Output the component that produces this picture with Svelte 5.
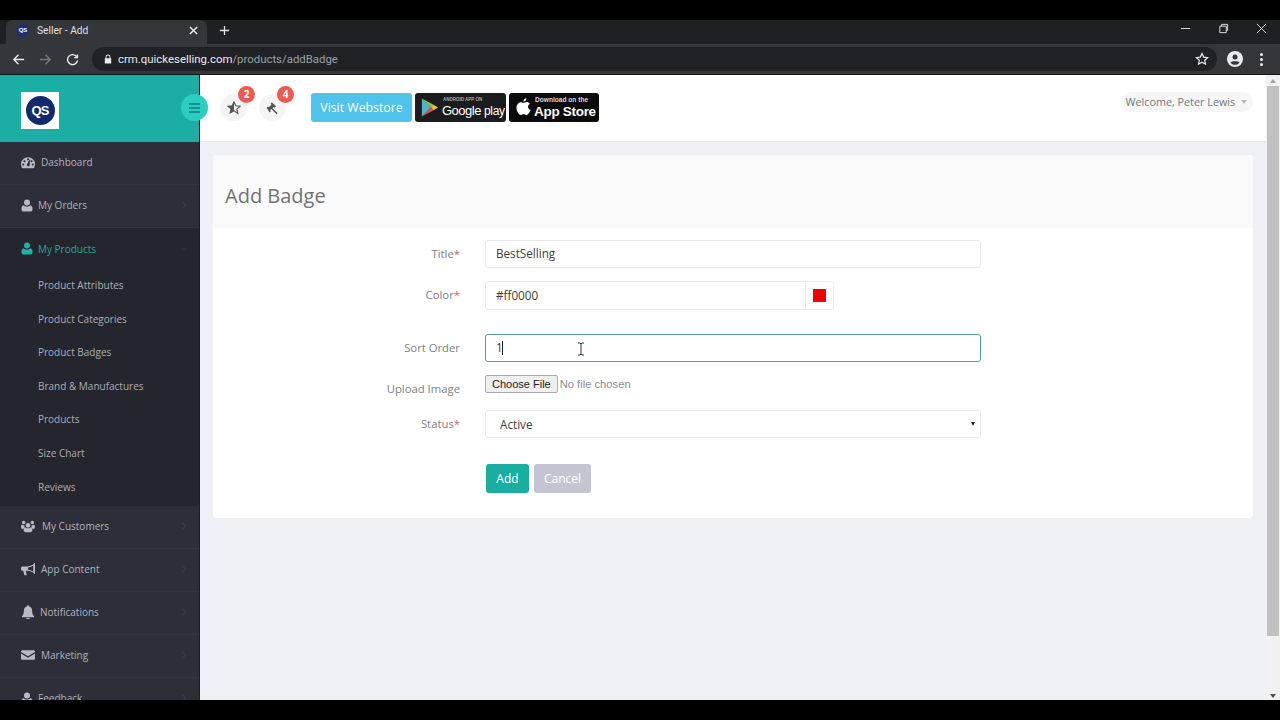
<script lang="ts">
  const icons = {
    gauge: 'M8 2.5a8 8 0 0 0-8 8c0 1.5.4 2.9 1.1 4.1.1.2.3.4.6.4h12.6c.3 0 .5-.2.6-.4.7-1.2 1.1-2.6 1.1-4.1a8 8 0 0 0-8-8zM2.5 12a1.2 1.2 0 1 1 0-2.4 1.2 1.2 0 0 1 0 2.4zm1.5-3.6a1.2 1.2 0 1 1 0-2.4 1.2 1.2 0 0 1 0 2.4zM8 6a1.2 1.2 0 1 1 0-2.4A1.2 1.2 0 0 1 8 6zm1.3 6.5a1.7 1.7 0 0 1-2.6-1.1c-.1-.6.2-1.2.6-1.5L9.6 5l.6.2-.2 5.4c.3.7 0 1.500-.7 1.900zM12 8.400a1.200 1.200 0 1 1 0-2.400 1.200 1.200 0 0 1 0 2.400zm1.500 3.600a1.200 1.200 0 1 1 0-2.400 1.200 1.200 0 0 1 0 2.400z',
    user: 'M8 0a4 4 0 1 1 0 8 4 4 0 0 1 0-8zM3.500 7.500c1 1.200 2.700 1.800 4.500 1.800s3.500-.6 4.500-1.800c1.900.4 2.900 2.200 2.900 5 0 2-1.200 3.500-2.800 3.500H3.400C1.800 16 .6 14.500.6 12.500c0-2.800 1-4.600 2.900-5z',
    users: 'M8 4.500a2.700 2.700 0 1 1 0 5.400 2.700 2.700 0 0 1 0-5.400zM3 2a2 2 0 1 1 0 4 2 2 0 0 1 0-4zm10 0a2 2 0 1 1 0 4 2 2 0 0 1 0-4zM0 8.500C0 7.300.8 6.700 1.500 6.700c.7.400 1.500.500 2.200.300-.1 1 .2 2 .9 2.800C3.600 10.100 3 10.800 2.700 11.500 1 11.500 0 10.500 0 8.500zm16 0c0 2-1 3-2.700 3-.3-.7-.9-1.400-1.900-1.700.7-.8 1-1.800.9-2.800.7.200 1.500.1 2.200-.3.700 0 1.500.6 1.500 1.800zM5.300 9.700c.7.600 1.700 1 2.700 1s2-.4 2.700-1c1.400.2 2.300 1.300 2.300 3 0 1.300-.9 2.300-2 2.300H5c-1.100 0-2-1-2-2.300 0-1.700.9-2.800 2.300-3z',
    bullhorn: 'M15.500 1c-.3 0-.5.200-.5.500v.3C13 3.800 10.500 5 7.500 5H1.800C.8 5 0 5.800 0 6.800v1.400C0 9.200.8 10 1.800 10h.8l1 4.500c.1.300.3.500.6.500h1.900c.3 0 .5-.3.400-.6L5.500 10h2c3 0 5.500 1.200 7.500 3.200v.3c0 .3.200.5.500.5s.5-.2.500-.5v-12c0-.3-.2-.5-.5-.5zM14 11c-1.800-1.300-3.800-2-6-2.200V6.200c2.200-.2 4.200-.9 6-2.200z',
    bell: 'M8 0c-.5 0-.9.400-.9.900v.6C4.800 2 3.300 3.900 3.300 6.200c0 4.300-1.300 5.500-2.300 6.800v1h14v-1c-1-1.300-2.300-2.500-2.300-6.800 0-2.300-1.500-4.200-3.800-4.700V.9C8.900.4 8.500 0 8 0zM6 14.800a2 2 0 0 0 4 0z',
    mail: 'M1.500 2.500h13c.8 0 1.500.7 1.500 1.500v.5L8 9.500 0 4.500V4c0-.8.7-1.500 1.500-1.500zM0 6.200l7.500 4.600c.3.200.7.200 1 0L16 6.200V12c0 .8-.7 1.500-1.500 1.500h-13C.7 13.500 0 12.800 0 12z'
  };

  const subItems = [
    'Product Attributes',
    'Product Categories',
    'Product Badges',
    'Brand & Manufactures',
    'Products',
    'Size Chart',
    'Reviews'
  ];

  const lowerItems = [
    { label: 'My Customers', icon: icons.users, gap: 7, small: false },
    { label: 'App Content', icon: icons.bullhorn, gap: 6, small: false },
    { label: 'Notifications', icon: icons.bell, gap: 5, small: false },
    { label: 'Marketing', icon: icons.mail, gap: 6, small: false },
    { label: 'Feedback', icon: icons.user, gap: 5, small: true }
  ];
</script>

<div class="shot">
  <div class="letterbox"></div>

  <div class="tabstrip">
    <div class="tab">
      <span class="favicon">QS</span>
      <span class="tab-title">Seller - Add</span>
      <svg class="tab-close" viewBox="0 0 10 10"><path d="M1 1l8 8M9 1l-8 8" /></svg>
    </div>
    <svg class="new-tab" viewBox="0 0 12 12"><path d="M6 1v10M1 6h10" /></svg>
    <div class="win-controls">
      <svg viewBox="0 0 12 12"><path d="M1 6h10" /></svg>
      <svg viewBox="0 0 12 12"><path d="M2 3.500h7v7H2zM4 3.500V1.500h6.500V8H9" /></svg>
      <svg viewBox="0 0 12 12"><path d="M1 1l10 10M11 1L1 11" /></svg>
    </div>
  </div>

  <div class="toolbar">
    <svg class="nav" viewBox="0 0 14 14"><path d="M13 7H2M7 2L2 7l5 5" /></svg>
    <svg class="nav dim" viewBox="0 0 14 14"><path d="M1 7h11M7 2l5 5-5 5" /></svg>
    <svg class="nav" viewBox="0 0 14 14"><path d="M11.800 4.500A5.400 5.400 0 1 0 12.400 8M12.300 1.500v3.500H8.800" /></svg>
    <div class="omnibox">
      <svg class="lock" viewBox="0 0 10 12"><path d="M2 5V3.500a3 3 0 0 1 6 0V5h1v6.500H1V5zm1.200 0h3.600V3.500a1.800 1.800 0 0 0-3.600 0z" /></svg>
      <span class="url">crm.quickeselling.com<span class="url-path">/products/addBadge</span></span>
      <svg class="bookmark" viewBox="0 0 14 14"><path d="M7 1.500l1.700 3.600 3.900.5-2.900 2.700.8 3.900L7 10.300l-3.500 1.900.8-3.900-2.900-2.700 3.900-.5z" /></svg>
    </div>
    <svg class="profile" viewBox="0 0 16 16"><circle cx="8" cy="8" r="8" fill="#e8eaed" /><circle cx="8" cy="6" r="2.500" fill="#35363a" /><path d="M3.500 11.500c1-1.700 8-1.700 9 0-1 1.500-2.800 2.300-4.500 2.300s-3.500-.8-4.500-2.300z" fill="#35363a" /></svg>
    <div class="kebab"><i></i><i></i><i></i></div>
  </div>

  <div class="page">
    <aside class="sidebar">
      <div class="brand">
        <div class="logo"><span>QS</span></div>
      </div>
      <a class="row">
        <svg class="row-icon" viewBox="0 0 16 16"><path d={icons.gauge} /></svg>
        <span class="gap-8">Dashboard</span>
      </a>
      <a class="row">
        <svg class="row-icon small" viewBox="0 0 16 16"><path d={icons.user} /></svg>
        <span class="gap-5">My Orders</span>
        <svg class="chev" viewBox="0 0 8 12"><path d="M2 2l4 4-4 4" /></svg>
      </a>
      <div class="open-group">
        <a class="row active">
          <svg class="row-icon small" viewBox="0 0 16 16"><path d={icons.user} /></svg>
          <span class="gap-5">My Products</span>
          <svg class="chev" viewBox="0 0 12 8"><path d="M2 2l4 4 4-4" /></svg>
        </a>
        <ul class="sub">
          {#each subItems as item}
            <li>{item}</li>
          {/each}
        </ul>
      </div>
      {#each lowerItems as item}
        <a class="row">
          <svg class="row-icon" class:small={item.small} viewBox="0 0 16 16"><path d={item.icon} /></svg>
          <span style:margin-left="{item.gap}px">{item.label}</span>
          <svg class="chev" viewBox="0 0 8 12"><path d="M2 2l4 4-4 4" /></svg>
        </a>
      {/each}
    </aside>

    <div class="main">
      <header class="topbar">
        <button class="burger" aria-label="Menu"><i></i><i></i><i></i></button>
        <div class="round-btn">
          <svg viewBox="0 0 16 16"><path d="M8 1l2 4.500 5 .5-3.700 3.300 1.100 4.900L8 11.200l-4.400 2.500 1.100-4.900L1 6l5-.5z" fill="none" stroke="#555" stroke-width="1.300" /><path d="M8 1v10.200l-4.400 2.500 1.100-4.900L1 6l5-.5z" fill="#555" /></svg>
          <span class="badge">2</span>
        </div>
        <div class="round-btn second">
          <svg viewBox="0 0 16 16"><path d="M6.500 1.500l5 4.500-1.600 1.700-1.100-.9-1.500 1.500 6 5.500-1.200 1.200-6-5.800-1.400 1.400.9 1-1.500 1.600L.8 7.800l1.600-1.600.9.9 3-3.200-.9-.9z" fill="#555" /></svg>
          <span class="badge">4</span>
        </div>
        <button class="webstore">Visit Webstore</button>
        <div class="store play">
          <svg viewBox="0 0 20 22">
            <path d="M1 1l10 10L1 21z" fill="#4db6c9" />
            <path d="M1 1l13 7-3 3z" fill="#8cc152" />
            <path d="M1 21l13-7-3-3z" fill="#e0523f" />
            <path d="M14 8l5 3-5 3-3-3z" fill="#f4b93e" />
          </svg>
          <div class="store-text">
            <small>ANDROID APP ON</small>
            <b>Google<em>play</em></b>
          </div>
        </div>
        <div class="store apple">
          <svg viewBox="0 0 16 20"><path d="M11.200 0c.1 1.800-1.400 3.700-3.300 3.600C7.700 1.800 9.400.1 11.200 0zM8 5c.8 0 1.800-.9 3.400-.9 1.100 0 2.500.5 3.400 1.800-2.800 1.700-2.400 5.500.7 6.700-.8 2.200-2.700 5.400-4.300 5.400-1 0-1.600-.7-2.900-.7s-2 .7-3 .7C3.300 18 .5 14.200.5 10.500c0-3.700 2.400-6.100 4.600-6.100C6.400 4.400 7.300 5 8 5z" fill="#fff" /></svg>
          <div class="store-text">
            <small>Download on the</small>
            <b>App Store</b>
          </div>
        </div>
        <div class="welcome">Welcome, Peter Lewis <span class="caret-down"></span></div>
      </header>

      <div class="content">
        <section class="card">
          <div class="card-head"><h1>Add Badge</h1></div>
          <form class="form">
            <div class="field">
              <label for="title">Title<span class="req">*</span></label>
              <input id="title" class="control" type="text" value="BestSelling" />
            </div>
            <div class="field color">
              <label for="color">Color<span class="req">*</span></label>
              <div class="color-group">
                <input id="color" class="control" type="text" value="#ff0000" />
                <span class="swatch-box"><span class="swatch"></span></span>
              </div>
            </div>
            <div class="field sort">
              <label for="sort">Sort Order</label>
              <div class="sort-wrap">
                <input id="sort" class="control focused" type="text" value="1" />
                <span class="text-caret"></span>
                <svg class="ibeam" viewBox="0 0 8 14"><path d="M1 1h2l1 1 1-1h2M4 2v10M1 13h2l1-1 1 1h2" /></svg>
              </div>
            </div>
            <div class="field upload">
              <label for="file">Upload Image</label>
              <input id="file" class="file" type="file" />
            </div>
            <div class="field status">
              <label for="status">Status<span class="req">*</span></label>
              <div class="select-wrap">
                <select id="status" class="control select">
                  <option>Active</option>
                </select>
              </div>
            </div>
            <div class="actions">
              <button type="button" class="btn add">Add</button>
              <button type="button" class="btn cancel">Cancel</button>
            </div>
          </form>
        </section>
      </div>
    </div>

    <div class="scrollbar">
      <span class="arrow up"></span>
      <div class="thumb"></div>
      <span class="arrow down"></span>
    </div>
  </div>

  <div class="letterbox"></div>
</div>

<style>
  :global(body) {
    margin: 0;
    background: #000;
    overflow: hidden;
  }

  .shot {
    width: 1280px;
    height: 720px;
    display: flex;
    flex-direction: column;
    font-family: 'Open Sans', sans-serif;
    overflow: hidden;
  }

  .letterbox {
    height: 20px;
    flex: none;
    background: #000;
  }

  /* browser chrome */
  .tabstrip {
    height: 24px;
    flex: none;
    background: #1f2024;
    display: flex;
    align-items: center;
    padding-left: 6px;
  }

  .tab {
    width: 201px;
    height: 24px;
    background: #35363a;
    border-radius: 7px 7px 0 0;
    display: flex;
    align-items: center;
    padding: 0 9px 4px 11px;
    box-sizing: border-box;
  }

  .favicon {
    width: 12px;
    height: 13px;
    border-radius: 50%;
    background: #1d2f6f;
    color: #fff;
    font: 700 6px/13px 'Liberation Sans', sans-serif;
    text-align: center;
    flex: none;
  }

  .tab-title {
    margin-left: 8px;
    font: 10.200px 'Roboto', sans-serif;
    color: #dfe1e5;
    flex: 1;
  }

  .tab-close {
    width: 9px;
    height: 9px;
    fill: none;
    stroke: #e8eaed;
    stroke-width: 1.600;
  }

  .new-tab {
    width: 11px;
    height: 11px;
    margin-left: 12px;
    margin-bottom: 4px;
    fill: none;
    stroke: #dfe1e5;
    stroke-width: 1.400;
  }

  .win-controls {
    margin-left: auto;
    display: flex;
    gap: 27px;
    padding-right: 13px;
    padding-bottom: 7px;
  }

  .win-controls svg {
    width: 11px;
    height: 11px;
    fill: none;
    stroke: #e8eaed;
    stroke-width: 1;
  }

  .toolbar {
    height: 31px;
    flex: none;
    box-sizing: border-box;
    background: #35363a;
    border-bottom: 1px solid #141517;
    display: flex;
    align-items: center;
    padding-left: 12px;
  }

  .nav {
    width: 13px;
    height: 13px;
    margin-right: 14px;
    fill: none;
    stroke: #e8eaed;
    stroke-width: 1.500;
    flex: none;
  }

  .nav.dim {
    stroke: #75777b;
  }

  .omnibox {
    width: 1125px;
    height: 24px;
    margin-left: -1px;
    background: #202124;
    border-radius: 12px;
    display: flex;
    align-items: center;
    padding: 0 8px 0 12px;
    box-sizing: border-box;
    flex: none;
  }

  .lock {
    width: 8px;
    height: 10px;
    fill: #e8eaed;
    flex: none;
  }

  .url {
    margin-left: 6px;
    font: 11.400px 'Roboto', sans-serif;
    color: #e8eaed;
    flex: 1;
  }

  .url-path {
    color: #9aa0a6;
  }

  .bookmark {
    width: 14px;
    height: 14px;
    fill: none;
    stroke: #e8eaed;
    stroke-width: 1.200;
  }

  .profile {
    width: 16px;
    height: 16px;
    margin-left: 10px;
    flex: none;
  }

  .kebab {
    margin-left: 17px;
    display: flex;
    flex-direction: column;
    gap: 2px;
  }

  .kebab i {
    width: 3px;
    height: 3px;
    border-radius: 50%;
    background: #e8eaed;
  }

  /* page */
  .page {
    flex: 1;
    min-height: 0;
    display: flex;
    background: #eef0f5;
    overflow: hidden;
  }

  .sidebar {
    width: 200px;
    flex: none;
    box-sizing: border-box;
    background: #2d2e38;
    border-right: 1px solid #1c1d22;
    overflow: hidden;
  }

  .brand {
    height: 67px;
    background: #1aaea5;
    display: flex;
    align-items: center;
    padding-left: 21px;
  }

  .logo {
    width: 38px;
    height: 37px;
    margin-top: 3px;
    background: #fff;
    display: flex;
    align-items: center;
    justify-content: center;
  }

  .logo span {
    width: 29px;
    height: 29px;
    border-radius: 50%;
    background: #12296b;
    color: #fff;
    font: 700 13px/29px 'Liberation Sans', sans-serif;
    letter-spacing: -1px;
    text-align: center;
  }

  .row {
    height: 43px;
    display: flex;
    align-items: center;
    padding: 0 11px 2px 21px;
    box-sizing: border-box;
    border-bottom: 1px solid #33343e;
    font-size: 10px;
    color: #b1b3bb;
  }

  .row-icon {
    width: 14px;
    height: 14px;
    fill: #b9bbc2;
    flex: none;
  }

  .row-icon.small {
    width: 12px;
    height: 13px;
  }

  .gap-8 {
    margin-left: 6px;
  }

  .gap-5 {
    margin-left: 5px;
  }

  .chev {
    margin-left: auto;
    width: 8px;
    height: 10px;
    fill: none;
    stroke: #41434d;
    stroke-width: 1.200;
  }

  .open-group {
    background: #25252e;
  }

  .row.active {
    color: #26a79d;
    border-bottom: 0;
  }

  .row.active .row-icon {
    fill: #1fb0a6;
  }

  .sub {
    list-style: none;
    margin: -2px 0 0;
    padding: 0 0 2px 38px;
    color: #acaeb6;
    font-size: 10px;
  }

  .sub li {
    height: 33.600px;
    line-height: 33.600px;
  }

  .main {
    flex: 1;
    min-width: 0;
    display: flex;
    flex-direction: column;
  }

  .topbar {
    position: relative;
    height: 67px;
    flex: none;
    box-sizing: border-box;
    background: #fff;
    border-bottom: 1px solid #e6e7eb;
    display: flex;
    align-items: flex-start;
    padding-top: 19px;
    padding-left: 20px;
  }

  .burger {
    position: absolute;
    left: -19px;
    top: 19px;
    width: 27px;
    height: 27px;
    padding: 0;
    border: 0;
    border-radius: 50%;
    background: #2bcfc2;
    display: flex;
    flex-direction: column;
    align-items: center;
    justify-content: center;
    gap: 2px;
  }

  .burger i {
    width: 11px;
    height: 2px;
    background: #1b8f90;
  }

  .round-btn {
    position: relative;
    width: 27px;
    height: 27px;
    border-radius: 50%;
    background: #f4f4f5;
    display: flex;
    align-items: center;
    justify-content: center;
  }

  .round-btn.second {
    margin-left: 12px;
  }

  .round-btn svg {
    width: 14px;
    height: 14px;
  }

  .badge {
    position: absolute;
    top: -8px;
    right: -8px;
    width: 17px;
    height: 17px;
    border-radius: 50%;
    background: #ec5a50;
    color: #fff;
    font-size: 10px;
    font-weight: 700;
    line-height: 17px;
    text-align: center;
  }

  .webstore {
    margin-left: 25px;
    margin-top: -1px;
    width: 101px;
    height: 29px;
    border: 0;
    border-radius: 3px;
    background: #4fc3ec;
    color: #fff;
    font: 12.300px 'Open Sans', sans-serif;
    padding: 0;
  }

  .store {
    height: 29px;
    margin-top: -1px;
    background: #1c1c1e;
    border-radius: 3px;
    color: #fff;
    display: flex;
    align-items: center;
    box-sizing: border-box;
    overflow: hidden;
  }

  .play {
    width: 91px;
    margin-left: 3px;
    padding-left: 6px;
  }

  .play svg {
    width: 18px;
    height: 21px;
    flex: none;
  }

  .apple {
    width: 90px;
    margin-left: 3px;
    padding-left: 7px;
    background: #0b0b0c;
  }

  .apple svg {
    width: 15px;
    height: 19px;
    flex: none;
  }

  .store-text {
    display: flex;
    flex-direction: column;
    margin-left: 3px;
    white-space: nowrap;
    font-family: 'Liberation Sans', sans-serif;
  }

  .store-text small {
    font-size: 6.500px;
    line-height: 8px;
    color: #d8d8d8;
  }

  .store-text b {
    font-weight: 400;
    line-height: 15px;
  }

  .store-text em {
    font-style: normal;
    margin-left: 3px;
    font-size: 12px;
    letter-spacing: -0.300px;
  }

  .play small {
    font-size: 4.500px;
    line-height: 6px;
    font-weight: 700;
    padding-left: 1px;
    color: #aaa;
  }

  .play b {
    font-size: 13px;
    letter-spacing: -0.500px;
  }

  .apple small {
    font-weight: 700;
    padding-left: 1px;
    font-size: 6.600px;
  }

  .apple b {
    font-weight: 700;
    font-size: 13.500px;
    letter-spacing: -0.300px;
  }

  .welcome {
    margin-left: auto;
    margin-right: 13px;
    margin-top: -2px;
    height: 20px;
    padding: 0 6px 0 4px;
    border-radius: 10px;
    background: #f6f6f7;
    color: #74767a;
    font-size: 10.800px;
    line-height: 20px;
    white-space: nowrap;
  }

  .caret-down {
    display: inline-block;
    margin-left: 3px;
    border: 3px solid transparent;
    border-top: 4px solid #b5b7bb;
    border-bottom: 0;
    vertical-align: 2px;
  }

  .content {
    flex: 1;
    padding: 13px 13px 0 13px;
    min-height: 0;
  }

  .card {
    height: 363px;
    background: #fff;
    border-radius: 4px;
  }

  .card-head {
    height: 73px;
    background: #fafafa;
    display: flex;
    align-items: center;
    padding-left: 12px;
    box-sizing: border-box;
    border-radius: 4px 4px 0 0;
  }

  h1 {
    margin: 0;
    font-size: 20px;
    font-weight: 400;
    color: #707276;
    padding-top: 8px;
  }

  .form {
    padding-top: 12px;
  }

  .field {
    display: flex;
    align-items: center;
    height: 28px;
    margin-bottom: 13px;
  }

  .field.color {
    height: 29px;
    margin-bottom: 24px;
  }

  .field.upload {
    height: 18px;
    margin-bottom: 17px;
    align-items: flex-start;
  }

  .field.status {
    margin-bottom: 26px;
  }

  label {
    width: 247px;
    flex: none;
    margin-right: 25px;
    padding-bottom: 2px;
    text-align: right;
    font-size: 11.300px;
    color: #7c7e82;
  }

  .upload label {
    padding: 6px 0 0;
  }

  .req {
    color: #c96a68;
  }

  .control {
    width: 496px;
    height: 28px;
    box-sizing: border-box;
    border: 1px solid #e9e9ec;
    border-radius: 3px;
    background: #fff;
    padding: 0 10px 2px;
    font: 11.700px 'Open Sans', sans-serif;
    color: #3b3c40;
    outline: 0;
  }

  .color-group {
    display: flex;
  }

  .color-group .control {
    width: 321px;
    height: 29px;
    border-radius: 3px 0 0 3px;
  }

  .swatch-box {
    width: 28px;
    height: 29px;
    box-sizing: border-box;
    border: 1px solid #ededf0;
    border-left: 0;
    border-radius: 0 3px 3px 0;
    display: flex;
    align-items: center;
    justify-content: center;
  }

  .swatch {
    width: 13px;
    height: 13px;
    background: #f00000;
  }

  .sort-wrap,
  .select-wrap {
    position: relative;
  }

  .select-wrap::after {
    content: '';
    position: absolute;
    right: 6px;
    top: 12px;
    border: 2.500px solid transparent;
    border-top: 4px solid #222;
    border-bottom: 0;
  }

  .control.focused {
    border-color: #4f9fa0;
  }

  .text-caret {
    position: absolute;
    left: 17px;
    top: 7px;
    width: 1px;
    height: 14px;
    background: #222;
  }

  .ibeam {
    position: absolute;
    left: 92px;
    top: 8px;
    width: 8px;
    height: 14px;
    fill: none;
    stroke: #333;
    stroke-width: 1;
  }

  .file {
    font: 11.200px 'Liberation Sans', sans-serif;
    color: #8a8c90;
    width: 300px;
    height: 18px;
  }

  .file::file-selector-button {
    height: 18px;
    padding: 0 6px;
    margin-right: 2px;
    font: 11px 'Liberation Sans', sans-serif;
    color: #222;
    background: #efefef;
    border: 1px solid #aaa;
    border-radius: 2px;
  }

  .select {
    display: block;
    appearance: none;
    padding-left: 14px;
    padding-bottom: 0;
    color: #3b3c40;
  }

  .actions {
    padding-left: 273px;
    display: flex;
    gap: 5px;
  }

  .btn {
    height: 29px;
    border: 0;
    border-radius: 3px;
    font: 12px 'Open Sans', sans-serif;
    color: #fff;
    padding: 0;
  }

  .add {
    width: 43px;
    background: #1aaea0;
  }

  .cancel {
    width: 57px;
    background: #c3c6d2;
  }

  .scrollbar {
    width: 14px;
    flex: none;
    background: #f1f1f1;
    display: flex;
    flex-direction: column;
    align-items: center;
  }

  .thumb {
    width: 12px;
    height: 550px;
    background: #c1c1c1;
  }

  .arrow {
    border: 3.500px solid transparent;
    margin: 4px 0 3px;
  }

  .arrow.up {
    border-top: 0;
    border-bottom: 4px solid #a3a3a3;
  }

  .arrow.down {
    margin-top: auto;
    margin-bottom: 2px;
    border-bottom: 0;
    border-top: 4px solid #505050;
  }
</style>
